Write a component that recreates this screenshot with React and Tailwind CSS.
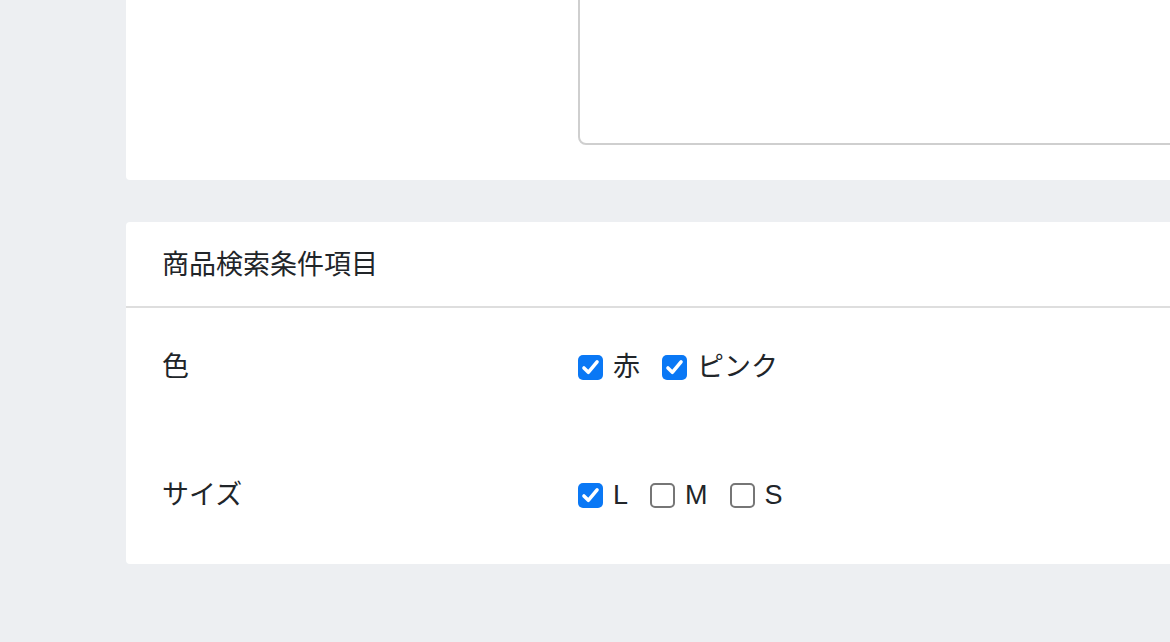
import React from 'react';

const fontStack = { fontFamily: '"Liberation Sans", "Noto Sans CJK JP", sans-serif' };

function Check({ checked, label }) {
  return (
    <label className="flex items-center gap-[10px]">
      {checked ? (
        <span className="flex h-[25px] w-[25px] items-center justify-center rounded-[5px] bg-[#0a78f5]">
          <svg viewBox="0 0 24 24" className="h-[21px] w-[21px]" fill="none" stroke="white" strokeWidth="4" strokeLinecap="round" strokeLinejoin="round">
            <path d="M4.5 12.5l5 5L19.5 5.5" />
          </svg>
        </span>
      ) : (
        <span className="h-[25px] w-[25px] rounded-[5px] border-2 border-[#767676] bg-white" />
      )}
      <span>{label}</span>
    </label>
  );
}

function Row({ title, children }) {
  return (
    <div className="flex h-[40px] items-center">
      <div className="w-[416px]">{title}</div>
      <div className="flex items-center gap-[22px]">{children}</div>
    </div>
  );
}

export default function App() {
  return (
    <div className="h-[642px] w-[1170px] overflow-hidden bg-[#edeff2] text-[27px] text-[#212529]" style={fontStack}>
      {/* 上のカード（スクロール済み） */}
      <div className="-mt-[60px] ml-[126px] w-[1200px] rounded-[4px] bg-white pb-[35px] pl-[452px] pt-[20px]">
        <div className="h-[185px] w-full rounded-[8px] border-2 border-[#cfcfcf] bg-white" />
      </div>

      <div className="ml-[126px] mt-[42px] w-[1200px] rounded-[4px] bg-white">
        <div className="flex h-[86px] items-center border-b-2 border-[#dedede] px-[36px] pt-[3px]">
          商品検索条件項目
        </div>
        <div className="flex flex-col gap-[88px] px-[36px] pb-[49px] pt-[39px]">
          <Row title="色">
            <Check checked label="赤" />
            <Check checked label="ピンク" />
          </Row>
          <Row title="サイズ">
            <Check checked label="L" />
            <Check label="M" />
            <Check label="S" />
          </Row>
        </div>
      </div>
    </div>
  );
}
